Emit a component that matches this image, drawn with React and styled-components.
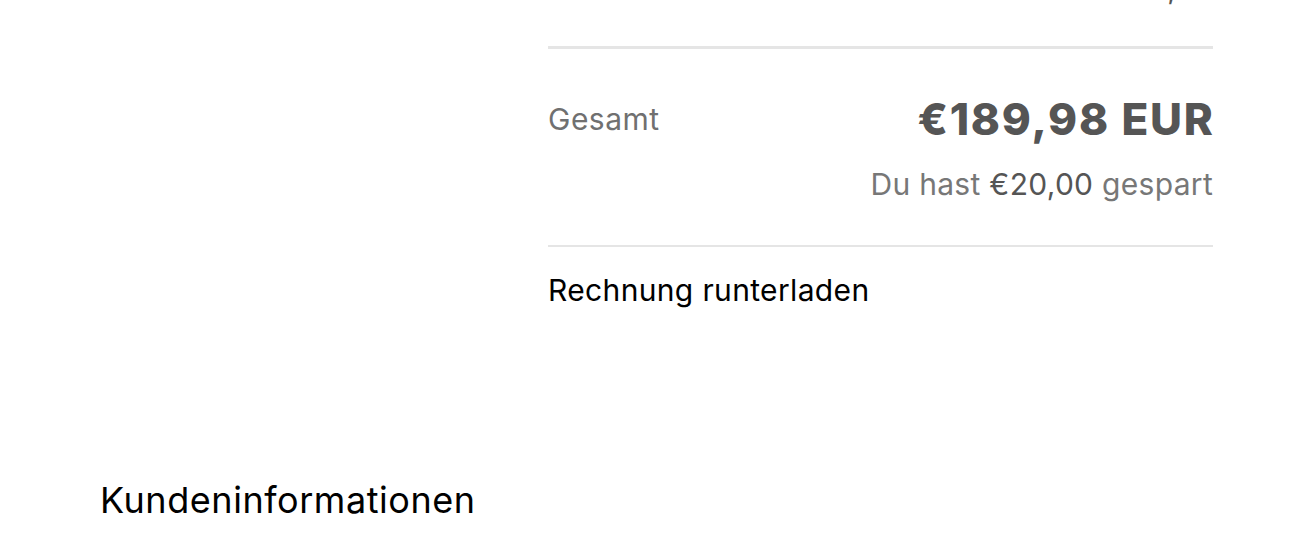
import React from "react";
import styled, { createGlobalStyle } from "styled-components";

const GlobalStyle = createGlobalStyle`
  html, body {
    margin: 0;
    padding: 0;
    background: #fff;
    overflow: hidden;
  }
  body {
    font-family: Inter, "Noto Sans", "Liberation Sans", sans-serif;
    -webkit-font-smoothing: antialiased;
  }
`;

const Page = styled.div`
  width: 1306px;
  height: 542px;
  overflow: hidden;
`;

const Scroll = styled.div`
  margin-top: -32px;
  padding: 0 93px 0 100px;
`;

const OrderGrid = styled.div`
  display: grid;
  grid-template-columns: 448px 665px;
`;

const Summary = styled.div`
  grid-column: 2;
  display: flex;
  flex-direction: column;
`;

const Row = styled.div`
  display: flex;
  justify-content: space-between;
  align-items: flex-start;
  margin-top: ${(p) => p.$top || 0}px;
`;

const Label = styled.span`
  font-size: 30px;
  line-height: 36px;
  letter-spacing: 0.5px;
  color: #707070;
  padding-top: ${(p) => p.$offset || 0}px;
`;

const Value = styled.span`
  font-size: 30px;
  line-height: 40px;
  color: #555;
`;

const Divider = styled.hr`
  border: none;
  margin: ${(p) => p.$top}px 0 0;
  height: ${(p) => p.$thick}px;
  background: #e5e5e5;
`;

const Total = styled.span`
  font-size: 44px;
  line-height: 46px;
  font-weight: 800;
  color: #555;
  letter-spacing: 1.8px;
  margin-right: -1.8px;
`;

const Savings = styled.div`
  margin-top: 24px;
  text-align: right;
  font-size: 30px;
  line-height: 36px;
  letter-spacing: 0.3px;
  color: #777;

  strong {
    font-weight: 400;
    color: #555;
  }
`;

const InvoiceLink = styled.a`
  margin-top: 25px;
  font-size: 30px;
  line-height: 36px;
  letter-spacing: 0.35px;
  color: #000;
  text-decoration: none;
  cursor: pointer;
`;

const SectionTitle = styled.h2`
  margin: 170px 0 0;
  font-size: 36px;
  line-height: 44px;
  letter-spacing: 0.55px;
  font-weight: 400;
  color: #000;
`;

export default function App() {
  return (
    <Page>
      <GlobalStyle />
      <Scroll>
        <OrderGrid>
          <Summary>
            <Row>
              <Label>Rabatt</Label>
              <Value>-€20,00</Value>
            </Row>
            <Divider $top={38} $thick={3} />
            <Row $top={47}>
              <Label $offset={5}>Gesamt</Label>
              <Total>€189,98 EUR</Total>
            </Row>
            <Savings>
              Du hast <strong>€20,00</strong> gespart
            </Savings>
            <Divider $top={43} $thick={2} />
            <InvoiceLink>Rechnung runterladen</InvoiceLink>
          </Summary>
        </OrderGrid>
        <SectionTitle>Kundeninformationen</SectionTitle>
      </Scroll>
    </Page>
  );
}
